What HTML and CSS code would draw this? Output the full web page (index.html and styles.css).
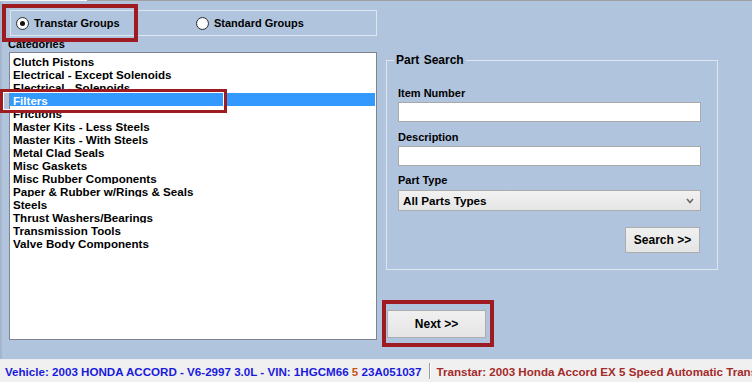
FILE: index.html
```html
<!DOCTYPE html>
<html lang="en">
<head>
    <meta charset="UTF-8">
    <title>Part Lookup</title>
    <link rel="stylesheet" href="styles.css">
</head>
<body>
    <div class="tabline"><span class="tab-edge"></span></div>

    <div class="main">
        <div class="left-col">
            <div class="radio-group">
                <label class="radio-opt"><span class="radio-dot checked"></span>Transtar Groups</label>
                <label class="radio-opt"><span class="radio-dot"></span>Standard Groups</label>
            </div>
            <div class="cat-label">Categories</div>
            <ul class="listbox">
                <li>Clutch Pistons</li>
                <li>Electrical - Except Solenoids</li>
                <li>Electrical - Solenoids</li>
                <li class="selected">Filters</li>
                <li>Frictions</li>
                <li>Master Kits - Less Steels</li>
                <li>Master Kits - With Steels</li>
                <li>Metal Clad Seals</li>
                <li>Misc Gaskets</li>
                <li>Misc Rubber Components</li>
                <li>Paper &amp; Rubber w/Rings &amp; Seals</li>
                <li>Steels</li>
                <li>Thrust Washers/Bearings</li>
                <li>Transmission Tools</li>
                <li>Valve Body Components</li>
            </ul>
        </div>

        <div class="right-col">
            <div class="part-search">
                <span class="legend">Part Search</span>
                <div class="field-label first">Item Number</div>
                <input class="text-field" type="text">
                <div class="field-label">Description</div>
                <input class="text-field" type="text">
                <div class="field-label type-label">Part Type</div>
                <div class="select-box">
                    <span>All Parts Types</span>
                    <svg width="8" height="6" viewBox="0 0 8 6"><path d="M1 1 L4 4.5 L7 1" fill="none" stroke="#6a6a6a" stroke-width="1.6"/></svg>
                </div>
                <div class="search-row">
                    <button class="win-btn search-btn">Search &gt;&gt;</button>
                </div>
            </div>
            <button class="win-btn next-btn">Next &gt;&gt;</button>
        </div>
    </div>

    <div class="status-bar">
        <span class="veh">Vehicle: 2003 HONDA ACCORD - V6-2997 3.0L - VIN: 1HGCM66 <span class="vin-mark">5</span> 23A051037</span>
        <span class="sep"></span>
        <span class="trans">Transtar: 2003 Honda Accord EX 5 Speed Automatic Transmission</span>
    </div>

    <!-- highlight callouts -->
    <div class="callout callout-transtar"></div>
    <div class="callout callout-filters"></div>
    <div class="callout callout-next"></div>
</body>
</html>
```

FILE: styles.css
```css
body {
    margin: 0;
    width: 752px;
    height: 382px;
    overflow: hidden;
    position: relative;
    background: #b0c4de;
    font-family: "Liberation Sans", Arial, sans-serif;
    font-weight: bold;
    color: #000;
}

.tabline {
    height: 1px;
    background: #a0a0a0;
}

.tab-edge {
    display: block;
    width: 87px;
    height: 1px;
    background: #f4f4f4;
}

.main {
    height: 358px;
    display: flex;
    box-shadow: inset 2px 0 0 #a4b5cc;
}

/* left side */
.left-col {
    margin-left: 9px;
    width: 368px;
    padding-top: 9px;
}

.radio-group {
    margin-left: 1px;
    width: 367px;
    height: 26px;
    box-sizing: border-box;
    border: 1px solid #e0e6ef;
    display: flex;
    align-items: center;
    padding-left: 5px;
}

.radio-opt {
    width: 189px;
    display: flex;
    align-items: center;
    gap: 5px;
    font-size: 11px;
}

.radio-dot {
    width: 13px;
    height: 13px;
    box-sizing: border-box;
    border: 1px solid #333;
    border-radius: 50%;
    background: radial-gradient(circle, #ffffff 40%, #e4e4e4 100%);
    display: flex;
    align-items: center;
    justify-content: center;
}

.radio-dot.checked::after {
    content: "";
    width: 5px;
    height: 5px;
    border-radius: 50%;
    background: #111;
}

.cat-label {
    height: 12px;
    line-height: 17.5px;
    overflow: hidden;
    margin-left: -1px;
    margin-bottom: 4px;
    font-size: 11px;
}

.listbox {
    list-style: none;
    margin: 0;
    padding: 1px 1px 1px 0;
    height: 288px;
    box-sizing: border-box;
    border: 1px solid #7f8590;
    background: #fff;
}

.listbox li {
    height: 13px;
    box-sizing: border-box;
    padding: 2px 0 0 3px;
    line-height: 11px;
    font-size: 11.6px;
    white-space: nowrap;
    overflow: hidden;
}

.listbox li.selected {
    background: #3399ff;
    color: #fff;
}

/* right side */
.right-col {
    margin-left: 9px;
    width: 332px;
}

.part-search {
    margin-top: 59px;
    height: 210px;
    box-sizing: border-box;
    border: 1px solid #e0e6ef;
    padding: 0 16px 0 11px;
}

.legend {
    display: block;
    width: fit-content;
    margin: -8px 0 0 -4px;
    padding: 0 2px;
    background: #b0c4de;
    font-size: 12px;
    line-height: 14px;
    word-spacing: 1px;
}

.field-label {
    font-size: 11px;
    line-height: 14px;
    margin-top: 8px;
}

.field-label.first {
    margin-top: 19px;
}

.field-label.type-label {
    margin-top: 7px;
}

.text-field {
    display: block;
    margin: 2px 0 0;
    width: 303px;
    height: 20px;
    box-sizing: border-box;
    border: 1px solid #a9a9a9;
    background: #fff;
    padding: 0 3px;
    outline: none;
}

.select-box {
    margin-top: 3px;
    width: 303px;
    height: 21px;
    box-sizing: border-box;
    border: 1px solid #acacac;
    background: linear-gradient(#f2f2f2, #e5e5e5);
    display: flex;
    align-items: center;
    justify-content: space-between;
    padding: 0 6px 0 4px;
    font-size: 11.7px;
}

.search-row {
    margin-top: 16px;
    display: flex;
    justify-content: flex-end;
}

.win-btn {
    box-sizing: border-box;
    border: 1px solid #adadad;
    background: linear-gradient(#f0f0f0, #e5e5e5);
    font-family: "Liberation Sans", Arial, sans-serif;
    font-weight: bold;
    font-size: 12px;
    color: #000;
    padding: 0;
    cursor: pointer;
}

.search-btn {
    width: 75px;
    height: 26px;
    margin-right: 1px;
}

.next-btn {
    display: block;
    margin: 40px 0 0 1px;
    width: 99px;
    height: 28px;
}

/* status bar */
.status-bar {
    height: 23px;
    box-sizing: border-box;
    border-top: 1px solid #e8ebef;
    background: #f0f0f0;
    display: flex;
    align-items: center;
    padding-left: 5px;
    white-space: nowrap;
    overflow: hidden;
    font-size: 11.6px;
}

.veh {
    color: #1a1adc;
}

.vin-mark {
    color: #c8561a;
}

.sep {
    width: 0;
    height: 16px;
    border-left: 1px solid #9a9a9a;
    border-right: 1px solid #fff;
    margin: 0 6px 0 7px;
}

.trans {
    color: #a52a2a;
}

/* red highlight boxes drawn over the form */
.callout {
    position: absolute;
    box-sizing: border-box;
    border: 4px solid #9d1b21;
    pointer-events: none;
}

.callout-transtar {
    left: 2px;
    top: 4px;
    width: 136px;
    height: 38px;
}

.callout-filters {
    left: 0;
    top: 89px;
    width: 227px;
    height: 24px;
    border-width: 3px;
    box-shadow: inset 0 0 0 1px #fff;
}

.callout-next {
    left: 382px;
    top: 300px;
    width: 112px;
    height: 47px;
}
```
